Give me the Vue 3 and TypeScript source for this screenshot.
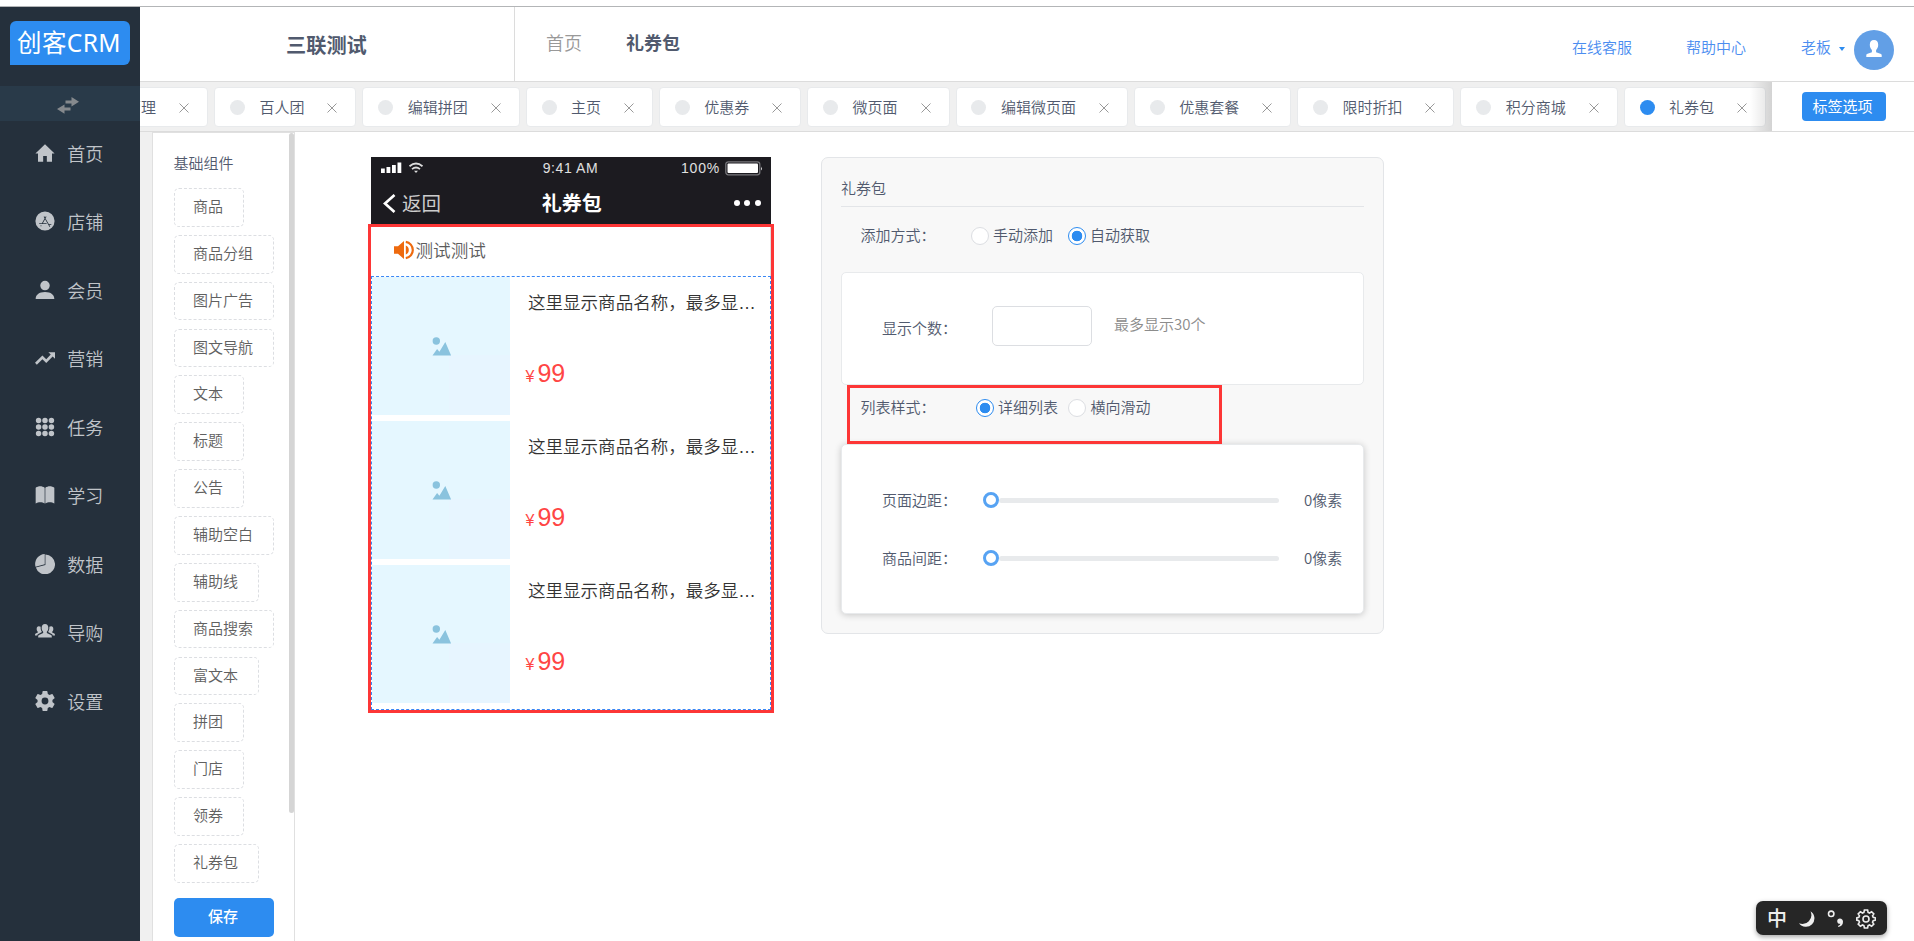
<script setup lang="ts">
interface MenuItem { label: string; icon: string; evenodd?: boolean }
interface Tab { label: string; active?: boolean }

const menu: MenuItem[] = [
  { label: '首页', icon: 'M12 1.5 0.5 12.6h3.1V22.5h6.2v-7h4.4v7h6.2v-9.9h3.1z' },
  { label: '店铺', icon: 'M12 0.5a11.5 11.5 0 1 0 0 23 11.5 11.5 0 0 0 0-23zM11.2 6.3l.9 1.500.9-1.500.8.500-1.200 2.100 3.900 6.600h3.100v.9h-2.600l1.300 2.200-.8.500-5.400-9.200-2.700 4.700h4.300l.5.9H5v-.9h3.300l3.200-5.700-1.100-2.100zM7 17l.9.500-.6 1-.8-.5z', evenodd: true },
  { label: '会员', icon: 'M12 1a5.7 5.7 0 1 0 0 11.4A5.7 5.7 0 0 0 12 1zM.8 22.8c0-5 4-8.3 11.2-8.3s11.2 3.300 11.2 8.300z' },
  { label: '营销', icon: 'M16 5h8v8l-2.800-2.800-7.700 7.700-4.600-4.500-6.700 6.600L0 17.800l8.900-8.900 4.600 4.600 5.400-5.600z' },
  { label: '任务', icon: 'M1 4.300a3.300 3.300 0 1 1 6.600 0a3.300 3.300 0 1 1-6.600 0M8.700 4.300a3.300 3.300 0 1 1 6.600 0a3.300 3.300 0 1 1-6.600 0M16.400 4.300a3.300 3.300 0 1 1 6.600 0a3.300 3.300 0 1 1-6.600 0M1 12a3.300 3.300 0 1 1 6.600 0a3.300 3.300 0 1 1-6.600 0M8.700 12a3.300 3.300 0 1 1 6.600 0a3.300 3.300 0 1 1-6.600 0M16.400 12a3.300 3.300 0 1 1 6.600 0a3.300 3.300 0 1 1-6.600 0M1 19.700a3.300 3.300 0 1 1 6.600 0a3.300 3.300 0 1 1-6.600 0M8.700 19.700a3.300 3.300 0 1 1 6.600 0a3.300 3.300 0 1 1-6.600 0M16.400 19.700a3.300 3.300 0 1 1 6.600 0a3.300 3.300 0 1 1-6.600 0' },
  { label: '学习', icon: 'M.8 3.200C4 .8 8.500.8 11.600 3.200v19C8.500 20 4 20 .8 22.200zM12.400 3.200C15.500.8 20 .8 23.200 3.200v19C20 20 15.500 20 12.400 22.200z' },
  { label: '数据', icon: 'M11.700 0v12.400L.6 15.200A12 12 0 0 1 11.700 0zM12.500.7A11.800 11.800 0 1 1 1 16.100l11.500-2.900z' },
  { label: '导购', icon: 'M12 2.500c2.600 0 4 2 4 4.600 0 2-.8 3.600-1.800 4.600v1.500l5 2.300c.8.400 1 1.200 1 3H3.800c0-1.800.2-2.600 1-3l5-2.300v-1.500C8.800 10.700 8 9.100 8 7.100c0-2.600 1.400-4.600 4-4.600zM4.600 5c.9 0 1.700.3 2.200.8-.2 2.500.3 4.600 1.500 6.200L4 14.500c-.7.400-1.100.9-1.300 1.600H0c0-1.300.2-2 .9-2.300l2.500-1.200v-1C2.400 10.800 2 9.600 2 8.300 2 6.300 2.900 5 4.600 5zM19.400 5c-.9 0-1.700.3-2.200.8.200 2.500-.3 4.600-1.500 6.200l4.300 2.500c.7.400 1.100.9 1.300 1.600H24c0-1.300-.2-2-.9-2.300l-2.500-1.200v-1c1-.8 1.400-2 1.400-3.300 0-2-.9-3.300-2.600-3.300z' },
  { label: '设置', icon: 'M20.900 13.200a9.500 9.500 0 0 0 0-2.400l2.500-2a.6.600 0 0 0 .1-.8l-2.400-4.100a.6.600 0 0 0-.7-.3l-3 1.200a9 9 0 0 0-2-1.200L14.900.5a.6.600 0 0 0-.6-.5H9.600a.6.600 0 0 0-.6.500l-.4 3.100a9 9 0 0 0-2.100 1.200l-2.900-1.200a.6.600 0 0 0-.7.300L.5 8a.6.600 0 0 0 .1.800l2.500 2a9.500 9.500 0 0 0 0 2.400l-2.500 2a.6.600 0 0 0-.1.800l2.400 4.100c.1.300.4.400.7.300l2.900-1.200a9 9 0 0 0 2.100 1.200l.4 3.100c0 .3.300.5.600.5h4.700c.3 0 .5-.2.600-.5l.4-3.100a9 9 0 0 0 2-1.200l3 1.200c.3.100.6 0 .7-.3l2.400-4.100a.6.600 0 0 0-.1-.8zM12 16.100a4.100 4.100 0 1 1 0-8.200 4.100 4.100 0 0 1 0 8.200z', evenodd: true },
]

const tabs: Tab[] = [
  { label: '管理' }, { label: '百人团' }, { label: '编辑拼团' }, { label: '主页' },
  { label: '优惠券' }, { label: '微页面' }, { label: '编辑微页面' }, { label: '优惠套餐' },
  { label: '限时折扣' }, { label: '积分商城' }, { label: '礼券包', active: true },
]

const widgets: string[] = [
  '商品', '商品分组', '图片广告', '图文导航', '文本', '标题', '公告', '辅助空白',
  '辅助线', '商品搜索', '富文本', '拼团', '门店', '领券', '礼券包',
]

const products = [1, 2, 3].map((id) => ({ id, name: '这里显示商品名称，最多显…', price: 99 }))
const sliders: string[] = ['页面边距：', '商品间距：']
</script>

<template>
  <div class="page">
    <aside class="side">
      <div class="logo">创客CRM</div>
      <div class="toggle">
        <svg width="22" height="17" viewBox="0 0 22 17"><path d="M14.500 0L22 4.800 14.500 9.600V6.400H8.500V3.400h6zM7.500 7.400v3.200h6v3h-6v3.200L0 12.100z" /></svg>
      </div>
      <nav class="menu">
        <a v-for="m in menu" :key="m.label" class="menu-item">
          <svg width="20" height="20" viewBox="0 0 24 24"><path :d="m.icon" :fill-rule="m.evenodd ? 'evenodd' : 'nonzero'" /></svg>
          <span>{{ m.label }}</span>
        </a>
      </nav>
    </aside>

    <div class="content">
      <header class="header">
        <div class="shop">三联测试</div>
        <div class="crumbs"><span>首页</span><b>礼券包</b></div>
        <div class="links">
          <a>在线客服</a><a>帮助中心</a>
          <div class="user"><a>老板</a><i class="caret"></i>
            <span class="avatar">
              <svg width="16" height="17" viewBox="0 0 16 17"><path d="M8 0c2.800 0 4.200 1.900 4.200 4.700 0 2.300-.9 4.200-2.100 5.300v2.200l4.300 1.500c.8.300 1.300.8 1.300 1.500V17H.3v-1.800c0-.7.5-1.200 1.300-1.500l4.300-1.500V10C4.700 8.900 3.800 7 3.800 4.700 3.800 1.900 5.200 0 8 0z" /></svg>
            </span>
          </div>
        </div>
      </header>

      <div class="tabbar">
        <div class="tabs">
          <div v-for="t in tabs" :key="t.label" class="tab" :class="{ on: t.active }">
            <i class="dot"></i><span>{{ t.label }}</span>
            <svg class="x" width="10" height="10" viewBox="0 0 10 10"><path d="M.5.5l9 9M9.500.5l-9 9" /></svg>
          </div>
        </div>
        <div class="tab-opts"><button>标签选项</button></div>
      </div>

      <div class="work">
        <section class="widgets">
          <h4>基础组件</h4>
          <div v-for="w in widgets" :key="w" class="widget">{{ w }}</div>
          <button class="save">保存</button>
          <i class="scroll"></i>
        </section>

        <section class="phone">
          <div class="status">
            <svg class="signal" width="44" height="12" viewBox="0 0 44 12">
              <path d="M0 6.500h3.800V11H0zM5.500 5h3.800v6H5.500zM11 3h3.800v8H11zM16.500 .5h3.800V11h-3.800z" />
              <g class="waves"><path d="M28.500 4.200q6.500-5.400 13 0M31 7.100q4-3.200 8 0" /><path d="M33 8.800h4L35 11z" /></g>
            </svg>
            <span class="time">9:41 AM</span>
            <span class="batt">100%
              <svg width="38" height="15" viewBox="0 0 38 15"><rect class="shell" x=".8" y=".8" width="34" height="13" rx="2.500" /><rect x="2.500" y="2.500" width="30.500" height="9.600" rx="1" /><path d="M36 5.500q1.500 2 0 4z" /></svg>
            </span>
          </div>
          <div class="navbar">
            <span class="back"><svg width="13" height="19" viewBox="0 0 13 19"><path d="M11.500 1L2 9.500l9.500 8.500" /></svg>返回</span>
            <b>礼券包</b>
            <span class="more"><i></i><i></i><i></i></span>
          </div>
          <div class="notice">
            <svg width="20" height="20" viewBox="0 0 20 20"><path d="M0 6.200h4L10 1v18l-6-5.200H0zM11.800 5.500q3 1.300 3 4.500t-3 4.500z" /><path class="wave" d="M11.800 1.800a8.300 8.300 0 0 1 0 16.400" /></svg>测试测试
          </div>
          <div class="goods">
            <article v-for="p in products" :key="p.id" class="good">
              <div class="thumb">
                <svg width="20" height="20" viewBox="0 0 20 20"><circle cx="4.300" cy="4" r="3.700" /><path d="M.5 18.500l4.600-6.400 2.300 2.600L13.300 5l5.800 13.500z" /></svg>
              </div>
              <div class="info">
                <p>{{ p.name }}</p>
                <div class="price"><small>¥</small>{{ p.price }}</div>
              </div>
            </article>
          </div>
          <div class="mark"></div>
        </section>

        <section class="panel">
          <h4>礼券包</h4>
          <div class="row add">
            <span class="lab">添加方式：</span>
            <label><i class="radio"></i>手动添加</label>
            <label><i class="radio on"></i>自动获取</label>
          </div>
          <div class="card count">
            <span class="lab">显示个数：</span><input type="text" /><em>最多显示30个</em>
          </div>
          <div class="row style">
            <span class="lab">列表样式：</span>
            <label><i class="radio on"></i>详细列表</label>
            <label><i class="radio"></i>横向滑动</label>
            <div class="mark"></div>
          </div>
          <div class="card spacing">
            <div v-for="s in sliders" :key="s" class="slide">
              <span class="lab">{{ s }}</span>
              <span class="knob"></span><span class="track"></span>
              <span class="value">0像素</span>
            </div>
          </div>
        </section>
      </div>
    </div>

    <div class="ime">
      <span>中</span>
      <svg width="18" height="18" viewBox="0 0 18 18"><path d="M12.500 1.200A9 9 0 0 1 1 13.300 8.500 8.500 0 1 0 12.500 1.200z" /></svg>
      <svg width="18" height="18" viewBox="0 0 18 18"><circle class="ring" cx="4.200" cy="3.800" r="2.700" /><path d="M12.800 8.500c2 0 3.200 1.300 3.200 3.200 0 2.800-1.500 4.600-4.600 5.300l-.4-1c1.500-.6 2.200-1.300 2.300-2.200-1.800.1-3.100-.9-3.100-2.600 0-1.600 1.100-2.700 2.600-2.700z" /></svg>
      <svg class="gear" width="20" height="20" viewBox="0 0 20 20"><path d="M8.400 1h3.200l.5 2.400 1.500.6 2-1.300 2.200 2.200-1.300 2 .7 1.500 2.300.5v2.200l-2.300.5-.7 1.500 1.300 2-2.200 2.200-2-1.300-1.500.6-.5 2.400H8.400l-.5-2.400-1.500-.6-2 1.300-2.200-2.200 1.300-2-.7-1.500L.8 11.100V8.900l2-.5.7-1.500-1.300-2 2.200-2.200 2 1.300 1.500-.6z" /><circle cx="10" cy="10" r="3" /></svg>
    </div>
  </div>
</template>

<style>
body { margin: 0; background: #fff; }
</style>

<style scoped>
.page {
  position: relative; display: flex; box-sizing: border-box; width: 1914px; height: 941px; overflow: hidden;
  margin: 0; padding-top: 6px; background: #fff; color: #515a6e;
  font: 350 15px/20px "Noto Sans CJK SC", sans-serif;
}
.page * { box-sizing: border-box; }
.page svg { display: block; flex: none; }
.page h4, .page p { margin: 0; font-weight: inherit; }
.page button { padding: 0; border: 0; background: #2d8cf0; color: #fff; font: 400 15px/20px "Noto Sans CJK SC", sans-serif; border-radius: 5px; }

.side { flex: none; width: 140px; border-top: 1px solid #b3b5b7; background: #25303c; }
.logo { width: 120px; height: 44px; margin: 14px 0 0 10px; padding-right: 2px; border-radius: 6px 6px 6px 0; background: #2d8cf0; color: #fff; font: 400 24.500px/43px "Noto Sans", "Noto Sans CJK SC", sans-serif; text-align: center; letter-spacing: .4px; }
.toggle { display: flex; align-items: center; justify-content: center; height: 35px; margin-top: 21px; padding: 3px 4px 0 0; background: #293a49; }
.toggle svg { fill: #85898d; }
.menu { margin-top: -2.500px; }
.menu-item { display: flex; align-items: center; height: 68.500px; padding-left: 34.500px; gap: 12.800px; color: #c0c4c9; font-size: 18px; line-height: 24px; }
.menu-item svg { fill: #c0c4c9; }

.content { display: flex; flex: 1; flex-direction: column; min-width: 0; border-top: 1px solid #b3b5b7; }
.header { display: flex; flex: none; height: 75px; border-bottom: 1px solid #dcdcdc; }
.shop { width: 375px; padding-left: 146px; border-right: 1px solid #dcdcdc; font-size: 20.200px; font-weight: 700; line-height: 75px; }
.crumbs { display: flex; gap: 44px; padding-left: 31px; color: #999; font-size: 18px; line-height: 70px; }
.crumbs b { color: #515a6e; font-weight: 700; }
.links { display: flex; align-items: center; gap: 54px; margin-left: auto; padding: 11px 20px 0 0; color: #4b8df0; }
.links a { margin-top: -5px; }
.user { display: flex; align-items: center; margin-left: 1px; }
.caret { margin: -1px 9px 0 8px; border: 3.500px solid transparent; border-top: 4.500px solid #2d8cf0; border-bottom: 0; }
.avatar { display: flex; align-items: center; justify-content: center; width: 40px; height: 40px; border-radius: 50%; background: #629fe6; }
.avatar svg { margin-top: -2px; fill: #fff; }

.tabbar { display: flex; flex: none; height: 50px; border-bottom: 1px solid #dcdcdc; background: #f0f0f0; }
.tabs { position: relative; display: flex; gap: 6.100px; width: 1632px; padding-top: 5px; overflow: hidden; }
.tabs::after { content: ""; position: absolute; top: 0; right: 0; width: 22px; height: 49px; background: linear-gradient(to right, transparent, rgba(0, 0, 0, .12)); }
.tab { display: flex; flex: none; align-items: center; height: 40px; padding: 0 18px 0 14.800px; border: 1px solid #e8eaec; border-radius: 4px; background: #fff; }
.tab:first-child { margin-left: -59.200px; }
.tab span { margin: -1px 22.900px 0 14.500px; }
.dot { width: 15px; height: 15px; border-radius: 50%; background: #e8eaec; }
.on .dot { background: #2d8cf0; }
.x { margin-top: 1px; fill: none; stroke: #999; stroke-width: 1; }
.tab-opts { flex: 1; padding: 10px 0 0 30px; background: #fff; }
.tab-opts button { display: block; width: 84px; height: 29px; padding: 0 3px 2px 0; border-radius: 4px; }

.work { display: flex; flex: 1; align-items: flex-start; min-height: 0; background: linear-gradient(to right, #f0f0f0 12px, #fff 12px); }
.widgets { position: relative; flex: none; width: 143px; height: 809px; margin-left: 12px; padding: 20px 0 0 20.500px; border: solid #e0e0e0; border-width: 1px 1px 0; background: #fff; }
.widgets h4 { margin-bottom: 15px; }
.widget { width: fit-content; height: 38.750px; margin-bottom: 8.110px; padding: 0 19.500px 0 18.500px; border: 1px dashed #dcdee2; border-radius: 5px; color: #606060; line-height: 34px; }
.page .save { display: block; width: 100px; height: 39px; margin-top: 15px; padding: 0 1px 2px 0; font-weight: 500; }
.scroll { position: absolute; top: 0; right: 0; width: 5px; height: 680px; border-radius: 3px; background: #d5d5d5; }

.phone { position: relative; flex: none; width: 400px; margin: 25px 0 0 76px; }
.status { display: grid; grid-template-columns: 1fr auto 1fr; align-items: center; height: 25px; padding: 0 8px 3px 10px; background: #1c1b20; color: #e0e0e0; font: 400 14px/20px "Liberation Sans", sans-serif; }
.status svg { fill: #fff; }
.waves { fill: #ddd; }
.waves path:first-child { fill: none; stroke: #ddd; stroke-width: 1.800; }
.time { margin-left: -3px; letter-spacing: .6px; }
.batt { display: flex; align-items: center; justify-content: flex-end; gap: 5px; letter-spacing: .8px; }
.batt .shell { fill: none; stroke: #77777b; stroke-width: 1.300; }
.navbar { display: grid; grid-template-columns: 1fr auto 1fr; align-items: center; height: 42px; padding: 0 10.500px 0 12px; background: #1c1b20; color: #fff; font-size: 20px; line-height: 24px; }
.navbar b { font-weight: 700; }
.back { display: flex; align-items: center; gap: 6px; color: #ccc; font-size: 19.500px; font-weight: 400; }
.back svg { fill: none; stroke: #fff; stroke-width: 2.700; }
.more { display: flex; justify-content: flex-end; gap: 4.500px; }
.more i { width: 6px; height: 6px; border-radius: 50%; background: #fff; }
.notice { display: flex; align-items: center; gap: 1.500px; height: 52px; padding-left: 23px; border-right: 1px solid #e0e0e0; color: #5c5c5c; font-size: 17.600px; }
.notice svg { fill: #ee6a0e; }
.wave { fill: none; stroke: #ee6a0e; stroke-width: 2.200; }
.goods { height: 434px; border: 1px dashed #3a87f5; }
.good { display: flex; height: 144px; }
.thumb { flex: none; width: 138px; height: 138px; padding: 59.500px 0 0 59.500px; background: linear-gradient(#e7f5ff, #e7f5ff) right bottom / 61px 60px no-repeat #e5f7ff; }
.thumb svg { fill: #8ac3de; }
.info { flex: 1; min-width: 0; padding: 13.500px 0 0 18px; }
.info p { color: #333; font-family: "Liberation Sans", "Noto Sans CJK SC", sans-serif; font-size: 17.550px; line-height: 24px; white-space: nowrap; }
.price { display: flex; align-items: baseline; gap: 3px; margin: 42.500px 0 0 -2.500px; color: #ff4544; font: 400 25px/32px "Liberation Sans", sans-serif; }
.price small { font-size: 16px; }
.mark { position: absolute; border: 3px solid #fd3636; pointer-events: none; }
.phone .mark { inset: 67px -3px -3px; }

.panel { flex: none; width: 563px; height: 477px; margin: 25px 0 0 50px; padding: 20px 19px 0; border: 1px solid #e3e5e8; border-radius: 7px; background: #f8f8f8; }
.panel h4 { height: 29px; border-bottom: 1px solid #e3e5e8; line-height: 19px; }
.lab { flex: none; width: 110px; }
.row { position: relative; display: flex; align-items: center; padding-left: 19.500px; }
.row label { display: flex; align-items: center; gap: 4.500px; }
.add { height: 65px; padding-bottom: 9px; }
.add label { margin-right: 14.500px; }
.radio { width: 18px; height: 18px; margin-top: 2px; border: 1px solid #dcdee2; border-radius: 50%; background: #fff; }
.radio.on { border-color: #2d8cf0; background: radial-gradient(circle, #2d8cf0 5px, #fff 5.600px); }
.card { border: 1px solid #e8eaec; border-radius: 5px; background: #fff; }
.count { display: flex; height: 113px; padding: 33px 0 0 40px; }
.count .lab { padding-top: 12px; }
.count input { width: 100px; height: 40px; border: 1px solid #dcdee2; border-radius: 5px; background: #fff; }
.count em { margin: 8px 0 0 22px; color: #8c8c8c; font-style: normal; }
.style { height: 59px; padding-bottom: 15px; }
.style label { margin-left: 5px; }
.style label + label { margin-left: 10px; }
.style .mark { top: 0; left: 6px; width: 375px; height: 59px; }
.spacing { height: 170px; padding: 27px 0 0 40px; box-shadow: 0 1px 7px rgba(0, 0, 0, .2); }
.slide { display: flex; align-items: center; height: 58px; padding-bottom: 2px; }
.slide .lab { width: 101px; }
.knob { z-index: 1; flex: none; width: 16px; height: 16px; border: 3px solid #57a3f3; border-radius: 50%; background: #fff; }
.track { flex: none; width: 280px; height: 5px; margin-right: 25px; border-radius: 3px; background: #e8eaec; }
.value { white-space: nowrap; }

.ime { position: absolute; top: 901px; left: 1756px; display: flex; align-items: center; justify-content: space-between; width: 131px; height: 34px; padding: 0 11px; border-radius: 7px; background: #262626; box-shadow: 0 2px 5px rgba(0, 0, 0, .35); color: #eee; font: 500 20px/32px "Noto Sans CJK SC", sans-serif; }
.ime svg { margin-top: 1px; fill: #eee; }
.ime .ring, .ime .gear { fill: none; stroke: #eee; stroke-width: 1.600; }
</style>
